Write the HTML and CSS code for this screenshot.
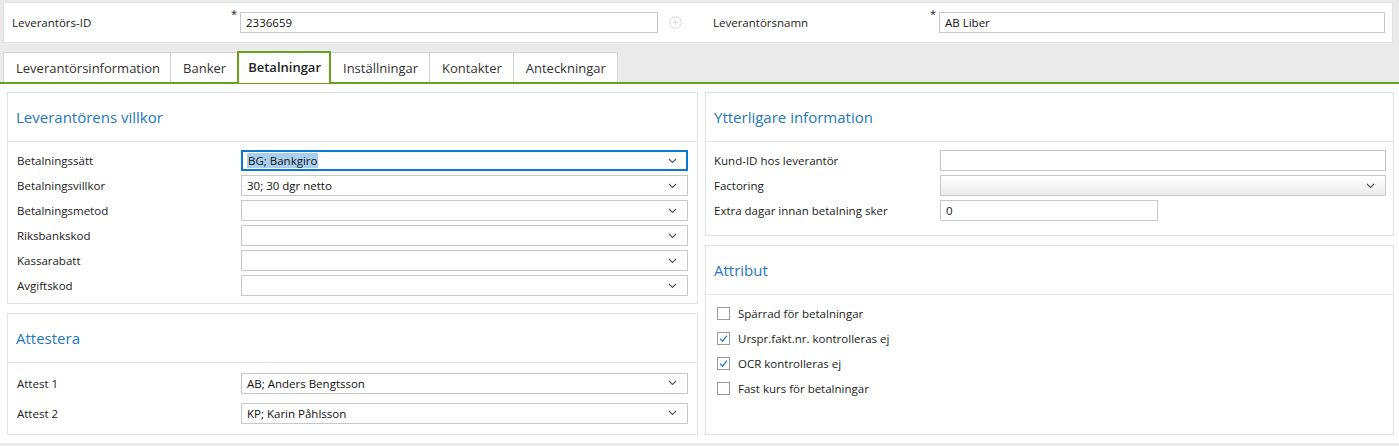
FILE: index.html
```html
<!DOCTYPE html>
<html lang="sv">
<head>
<meta charset="utf-8">
<title>Leverantör</title>
<link rel="stylesheet" href="styles.css">
</head>
<body>
<div class="top">
  <div class="top-half left">
    <span class="top-label">Leverantörs-ID</span>
    <span class="req">*</span>
    <div class="input top-input">2336659</div>
    <span class="plus-icon"><svg width="13" height="13" viewBox="0 0 13 13"><circle cx="6.5" cy="6.5" r="5.8" fill="none" stroke="#d8d8d8" stroke-width="1"/><path d="M6.5 4v5M4 6.5h5" stroke="#d8d8d8" stroke-width="1"/></svg></span>
  </div>
  <div class="top-half right">
    <span class="top-label">Leverantörsnamn</span>
    <span class="req">*</span>
    <div class="input top-input">AB Liber</div>
  </div>
</div>

<div class="tabs">
  <div class="tab">Leverantörsinformation</div>
  <div class="tab">Banker</div>
  <div class="tab active">Betalningar</div>
  <div class="tab">Inställningar</div>
  <div class="tab">Kontakter</div>
  <div class="tab">Anteckningar</div>
</div>

<div class="content">
  <div class="col">
    <section class="panel p-villkor">
      <h2 class="panel-title">Leverantörens villkor</h2>
      <div class="panel-body form">
        <div class="row"><span class="lbl">Betalningssätt</span><div class="select focus"><span class="sel-text">BG; Bankgiro</span><svg class="chev" width="9" height="6" viewBox="0 0 9 6"><path d="M1 1l3.5 3.5L8 1" fill="none" stroke="#555" stroke-width="1.1"/></svg></div></div>
        <div class="row"><span class="lbl">Betalningsvillkor</span><div class="select"><span>30; 30 dgr netto</span><svg class="chev" width="9" height="6" viewBox="0 0 9 6"><path d="M1 1l3.5 3.5L8 1" fill="none" stroke="#555" stroke-width="1.1"/></svg></div></div>
        <div class="row"><span class="lbl">Betalningsmetod</span><div class="select"><span></span><svg class="chev" width="9" height="6" viewBox="0 0 9 6"><path d="M1 1l3.5 3.5L8 1" fill="none" stroke="#555" stroke-width="1.1"/></svg></div></div>
        <div class="row"><span class="lbl">Riksbankskod</span><div class="select"><span></span><svg class="chev" width="9" height="6" viewBox="0 0 9 6"><path d="M1 1l3.5 3.5L8 1" fill="none" stroke="#555" stroke-width="1.1"/></svg></div></div>
        <div class="row"><span class="lbl">Kassarabatt</span><div class="select"><span></span><svg class="chev" width="9" height="6" viewBox="0 0 9 6"><path d="M1 1l3.5 3.5L8 1" fill="none" stroke="#555" stroke-width="1.1"/></svg></div></div>
        <div class="row"><span class="lbl">Avgiftskod</span><div class="select"><span></span><svg class="chev" width="9" height="6" viewBox="0 0 9 6"><path d="M1 1l3.5 3.5L8 1" fill="none" stroke="#555" stroke-width="1.1"/></svg></div></div>
      </div>
    </section>
    <section class="panel p-attest">
      <h2 class="panel-title">Attestera</h2>
      <div class="panel-body form">
        <div class="row tall"><span class="lbl">Attest 1</span><div class="select"><span>AB; Anders Bengtsson</span><svg class="chev" width="9" height="6" viewBox="0 0 9 6"><path d="M1 1l3.5 3.5L8 1" fill="none" stroke="#555" stroke-width="1.1"/></svg></div></div>
        <div class="row tall"><span class="lbl">Attest 2</span><div class="select"><span>KP; Karin Påhlsson</span><svg class="chev" width="9" height="6" viewBox="0 0 9 6"><path d="M1 1l3.5 3.5L8 1" fill="none" stroke="#555" stroke-width="1.1"/></svg></div></div>
      </div>
    </section>
  </div>
  <div class="col">
    <section class="panel p-info">
      <h2 class="panel-title">Ytterligare information</h2>
      <div class="panel-body form wide">
        <div class="row"><span class="lbl">Kund-ID hos leverantör</span><div class="input"></div></div>
        <div class="row"><span class="lbl">Factoring</span><div class="select grad"><span></span><svg class="chev" width="9" height="6" viewBox="0 0 9 6"><path d="M1 1l3.5 3.5L8 1" fill="none" stroke="#555" stroke-width="1.1"/></svg></div></div>
        <div class="row"><span class="lbl">Extra dagar innan betalning sker</span><div class="input short">0</div></div>
      </div>
    </section>
    <section class="panel p-attr grow">
      <h2 class="panel-title">Attribut</h2>
      <div class="panel-body checks">
        <label class="check"><span class="box"></span>Spärrad för betalningar</label>
        <label class="check"><span class="box"><svg width="11" height="11" viewBox="0 0 11 11"><path d="M2.2 5.8l2.3 2.4L9 2.6" fill="none" stroke="#1e7fd0" stroke-width="1.3"/></svg></span>Urspr.fakt.nr. kontrolleras ej</label>
        <label class="check"><span class="box"><svg width="11" height="11" viewBox="0 0 11 11"><path d="M2.2 5.8l2.3 2.4L9 2.6" fill="none" stroke="#1e7fd0" stroke-width="1.3"/></svg></span>OCR kontrolleras ej</label>
        <label class="check"><span class="box"></span>Fast kurs för betalningar</label>
      </div>
    </section>
  </div>
</div>
<div class="footer-strip"></div>
</body>
</html>
```

FILE: styles.css
```css
* { box-sizing: border-box; }
html, body { margin: 0; padding: 0; }
body {
  background: #eaeaea;
  font-family: "Open Sans", "Noto Sans", "Liberation Sans", sans-serif;
  font-size: 11.5px;
  color: #222;
  width: 1399px;
  height: 446px;
  overflow: hidden;
}

.input, .select {
  height: 21px;
  border: 1px solid #c8c8c8;
  background: #fff;
  display: flex;
  align-items: center;
  padding: 0 5px;
  flex: 1;
  font-size: 11.5px;
  color: #111;
}

.top {
  margin: 2px 6px 0 3px;
  height: 41px;
  background: #fff;
  border: 1px solid #e2e2e2;
  display: flex;
  align-items: center;
}
.top-half { display: flex; align-items: center; }
.top-half.left { width: 695px; }
.top-half.right { flex: 1; }
.top-label { width: 227px; padding-left: 8px; flex: none; }
.top-half.right .top-label { padding-left: 14px; width: 231px; }
.req { width: 9px; align-self: flex-start; margin-top: -6px; font-size: 11px; flex: none; }
.top-half.left .top-input { width: 418px; flex: none; }
.top-half.right .top-input { flex: 1; margin-right: 7px; }
.plus-icon { margin-left: 11px; display: flex; }

.tabs {
  margin-top: 9px;
  display: flex;
  padding-left: 3px;
  border-bottom: 2px solid #67a21c;
  height: 32px;
}
.tab {
  background: #fff;
  border: 1px solid #d4d4d4;
  border-bottom: none;
  border-left: none;
  height: 30px;
  padding: 0 11px 0 12px;
  display: flex;
  align-items: center;
  font-size: 13px;
  color: #333;
}
.tab:first-child { border-left: 1px solid #d4d4d4; padding-right: 10px; }
.tab.active {
  border: 2px solid #67a21c;
  border-bottom: none;
  height: 32px;
  margin-top: -1px;
  margin-bottom: -2px;
  padding: 0 8px 2px 9px;
  font-weight: 600;
  color: #222;
  margin-left: -1px;
}

.content {
  background: #fff;
  padding: 8px 6px 0 7px;
  display: grid;
  grid-template-columns: 691px 689px;
  column-gap: 7px;
  height: 359px;
}
.col { display: flex; flex-direction: column; gap: 9px; padding-bottom: 8px; }
.panel {
  border: 1px solid #e1e1e1;
  background: #fff;
}
.panel.grow { flex: 1; }
.panel-title {
  margin: 0;
  height: 49px;
  border-bottom: 1px solid #e6e6e6;
  font-size: 15px;
  font-weight: 400;
  color: #2378bd;
  padding: 14px 0 0 8px;
}
.form .row {
  display: flex;
  align-items: center;
  height: 25px;
  padding: 0 9px;
}
.form .row.tall { height: 30px; }
.p-villkor .panel-body { padding: 6px 0 5px; }
.p-attest .panel-body { padding: 5px 0 6px; }
.p-info .panel-body { padding: 6px 0 12px; }
.lbl { width: 224px; flex: none; }
.wide .lbl { width: 226px; }
.wide .row { padding: 0 7px 0 8px; }

.input.short { flex: none; width: 218px; }
.select { justify-content: space-between; padding-right: 10px; }
.select.focus { border: 2px solid #0a7ad1; padding-left: 4px; padding-right: 9px; }
.sel-text { background: #a9cfee; padding: 0 1px; }
.select.grad { background: linear-gradient(#ffffff, #ececec); }
.chev { flex: none; }

.checks { padding: 6px 11px; }
.check {
  display: flex;
  align-items: center;
  height: 25px;
  gap: 8px;
  color: #222;
}
.box {
  width: 13px;
  height: 13px;
  border: 1px solid #9a9a9a;
  background: #fff;
  display: flex;
  align-items: center;
  justify-content: center;
  flex: none;
}

.footer-strip { height: 3px; }
```
